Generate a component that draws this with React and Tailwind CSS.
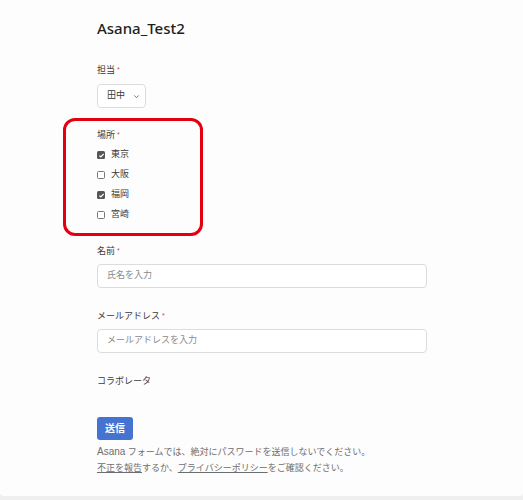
import React from 'react';

const jp = "font-['Liberation_Sans','Noto_Sans_CJK_JP',sans-serif]";

const Label = ({ children, required }) => (
  <div className={`${jp} text-[9px] leading-4 text-[#3a3a3a]`}>
    {children}
    {required && <span className="ml-[2px] text-[7px] text-[#e8384f] align-top">*</span>}
  </div>
);

const Checkbox = ({ checked, label }) => (
  <label className="flex items-center gap-[6px] h-5">
    {checked ? (
      <span className="flex items-center justify-center w-2 h-2 rounded-[1.5px] bg-[#555]">
        <svg viewBox="0 0 8 8" className="w-[7px] h-[7px]">
          <path d="M1.6 4.1 L3.2 5.7 L6.4 2.3" fill="none" stroke="#fff" strokeWidth="1.3" />
        </svg>
      </span>
    ) : (
      <span className="w-2 h-2 rounded-[1.5px] border border-[#777] bg-white" />
    )}
    <span className={`${jp} text-[9px] text-[#3a3a3a]`}>{label}</span>
  </label>
);

const TextInput = ({ placeholder }) => (
  <div className="mt-[5px] w-[330px] h-6 rounded-[4px] border border-[#dcdcdc] bg-white flex items-center pl-[9px]">
    <span className={`${jp} text-[9px] text-[#8a8a8a]`}>{placeholder}</span>
  </div>
);

export default function App() {
  return (
    <div className="h-[500px] w-[523px] bg-[#efefef] overflow-hidden">
      <div className="h-[496px] bg-[#fdfdfd] rounded-b-[4px] pl-[97px] pt-4 flex flex-col">
        <h1 className="font-['Noto_Sans',sans-serif] font-medium text-[15px] leading-6 text-[#1e1f21]">
          Asana_Test2
        </h1>

        <div className="mt-[22px]">
          <Label required>担当</Label>
          <button className="mt-[6px] h-6 w-[49px] rounded-[4px] border border-[#dcdcdc] bg-white flex items-center pl-[9px] gap-[8px]">
            <span className={`${jp} text-[9px] text-[#3a3a3a]`}>田中</span>
            <svg viewBox="0 0 8 8" className="w-[7px] h-[7px]">
              <path d="M1.5 2.8 L4 5.3 L6.5 2.8" fill="none" stroke="#555" strokeWidth="0.9" />
            </svg>
          </button>
        </div>

        <div className="relative mt-[19px]">
          <div className="absolute -left-[34px] -top-[9px] w-[140px] h-[118px] rounded-[12px] border-[3px] border-[#e3000f]" />
          <Label required>場所</Label>
          <div className="mt-[2px] flex flex-col">
            <Checkbox checked label="東京" />
            <Checkbox label="大阪" />
            <Checkbox checked label="福岡" />
            <Checkbox label="宮崎" />
          </div>
        </div>

        <div className="mt-[18px]">
          <Label required>名前</Label>
          <TextInput placeholder="氏名を入力" />
        </div>

        <div className="mt-[20px]">
          <Label required>メールアドレス</Label>
          <TextInput placeholder="メールアドレスを入力" />
        </div>

        <div className="mt-[20px]">
          <Label>コラボレータ</Label>
        </div>

        <button className={`${jp} mt-[28px] self-start h-[23px] w-9 rounded-[3px] bg-[#4573d2] text-white text-[10px] font-bold`}>
          送信
        </button>

        <div className={`${jp} mt-[4px] text-[9px] leading-4 text-[#6d6e6f]`}>
          <p><span className="text-[10px]">Asana</span> フォームでは、絶対にパスワードを送信しないでください。</p>
          <p>
            <span className="underline">不正を報告</span>するか、<span className="underline">プライバシーポリシー</span>をご確認ください。
          </p>
        </div>
      </div>
    </div>
  );
}
